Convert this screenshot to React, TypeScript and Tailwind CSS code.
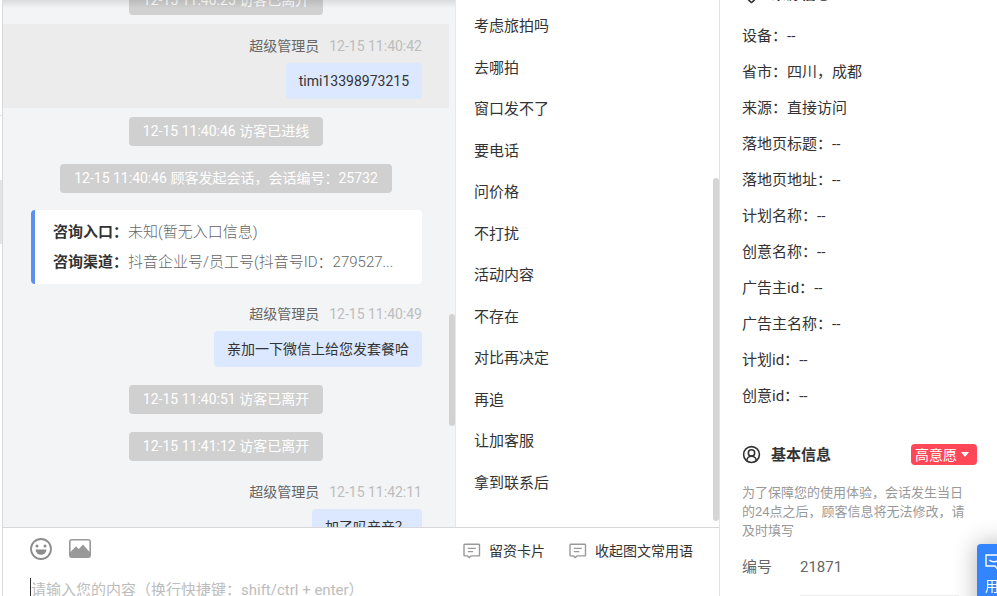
import { CircleUserRound, MapPin } from 'lucide-react'

const quickReplies = [
  '考虑旅拍吗', '去哪拍', '窗口发不了', '要电话', '问价格', '不打扰',
  '活动内容', '不存在', '对比再决定', '再追', '让加客服', '拿到联系后',
]

const sourceInfo = [
  ['设备', '--'],
  ['省市', '四川，成都'],
  ['来源', '直接访问'],
  ['落地页标题', '--'],
  ['落地页地址', '--'],
  ['计划名称', '--'],
  ['创意名称', '--'],
  ['广告主id', '--'],
  ['广告主名称', '--'],
  ['计划id', '--'],
  ['创意id', '--'],
]

function Notice({ children }: { children: string }) {
  return (
    <div className="flex justify-center py-[9px]">
      <p className="h-[29px] rounded-sm bg-[#d0d0d0] px-3.5 text-sm leading-[29px] text-white">{children}</p>
    </div>
  )
}

function Message({ time, text, active = false }: { time: string; text: string; active?: boolean }) {
  return (
    <div className={`flex h-[84px] flex-col items-end pt-3 pr-[27px] ${active ? 'bg-[#ececec]' : ''}`}>
      <div className="flex gap-2.5 text-sm leading-5">
        <span className="text-[#666]">超级管理员</span>
        <time className="text-[#bdbdbd]">{time}</time>
      </div>
      <p className="mt-[7px] h-9 rounded bg-[#dce8ff] px-[13px] text-sm leading-9 text-[#333]">{text}</p>
    </div>
  )
}

function CardIcon() {
  return (
    <svg width="18" height="16" viewBox="0 0 18 16" fill="none" stroke="#999" strokeWidth="1.4">
      <path d="M1.7 1.2h14.1a.7.7 0 0 1 .7.7v10.3a.7.7 0 0 1-.7.7H8l-1.8 1.6-1.8-1.6H1.7a.7.7 0 0 1-.7-.7V1.9a.7.7 0 0 1 .7-.7Z" />
      <path d="M4.8 5.4h8M4.8 8.6h5.4" />
    </svg>
  )
}

function Chat() {
  return (
    <section className="relative flex min-w-0 flex-1 overflow-hidden border-r border-[#e6e8eb] bg-[#f3f4f6]">
      <div className="-mt-[23px] min-w-0 flex-1">
        <Notice>12-15 11:40:25 访客已离开</Notice>
        <Message time="12-15 11:40:42" text="timi13398973215" active />
        <Notice>12-15 11:40:46 访客已进线</Notice>
        <Notice>12-15 11:40:46 顾客发起会话，会话编号：25732</Notice>
        <dl className="my-2 mr-[27px] ml-7 overflow-hidden rounded-sm border-l-4 border-[#5b8ff0] bg-white py-[7px] pl-[18px] text-[15px] leading-[30px] whitespace-nowrap">
          <div className="flex">
            <dt className="font-bold text-[#333]">咨询入口：</dt>
            <dd className="font-light text-[#666]">未知(暂无入口信息)</dd>
          </div>
          <div className="flex">
            <dt className="font-bold text-[#333]">咨询渠道：</dt>
            <dd className="font-light text-[#666]">抖音企业号/员工号(抖音号ID：279527...</dd>
          </div>
        </dl>
        <Message time="12-15 11:40:49" text="亲加一下微信上给您发套餐哈" />
        <Notice>12-15 11:40:51 访客已离开</Notice>
        <Notice>12-15 11:41:12 访客已离开</Notice>
        <Message time="12-15 11:42:11" text="加了吗亲亲？" />
      </div>
      <div className="w-1.5 pt-[314px]">
        <div className="h-28 rounded-full bg-[#d2d2d2]" />
      </div>
      <div className="absolute inset-x-0 top-0 h-2 bg-linear-to-b from-black/10 to-transparent" />
    </section>
  )
}

function QuickReplies() {
  return (
    <section className="flex w-[263px] shrink-0 bg-white">
      <ul className="flex flex-1 flex-col justify-between pt-4 pb-[34px] pl-[18px] text-[15px] leading-5 text-[#333]">
        {quickReplies.map((reply) => (
          <li key={reply}>{reply}</li>
        ))}
      </ul>
      <div className="w-1.5 pt-[178px] pb-1.5">
        <div className="h-full rounded-full bg-[#d6d6d6]" />
      </div>
    </section>
  )
}

function Composer() {
  return (
    <footer className="h-[69px] shrink-0 overflow-hidden border-t border-[#d8d8d8] bg-white">
      <div className="flex h-[46px] items-center justify-between pr-[26px] pl-[27px]">
        <div className="flex items-center gap-4 pb-1">
          <button aria-label="表情">
            <svg width="22" height="22" viewBox="0 0 22 22">
              <circle cx="11" cy="11" r="10" fill="none" stroke="#8c8c8c" strokeWidth="1.8" />
              <circle cx="7" cy="8" r="1.5" fill="#8c8c8c" />
              <circle cx="15" cy="8" r="1.5" fill="#8c8c8c" />
              <path d="M5.6 11.6h10.8a5.4 5.2 0 0 1-10.8 0Z" fill="#8c8c8c" />
            </svg>
          </button>
          <button aria-label="图片">
            <svg width="24" height="22" viewBox="0 0 24 22">
              <rect x="1.8" y="1.8" width="20.4" height="17.4" rx="2.2" fill="none" stroke="#999" strokeWidth="1.6" />
              <path d="M2 14.5 8 8.2l2.8 2.9L15 6.6l7 7.9v3.8a1 1 0 0 1-1 1H3a1 1 0 0 1-1-1Z" fill="#999" />
            </svg>
          </button>
        </div>
        <div className="flex items-center gap-6 text-sm text-[#333]">
          <button className="flex items-center gap-2">
            <CardIcon />
            留资卡片
          </button>
          <button className="flex items-center gap-2">
            <CardIcon />
            收起图文常用语
          </button>
        </div>
      </div>
      <div className="flex pt-1 pl-[27px]">
        <span className="h-6 w-px shrink-0 bg-[#333]" />
        <textarea
          aria-label="消息"
          placeholder="请输入您的内容（换行快捷键：shift/ctrl + enter）"
          className="h-12 flex-1 resize-none text-[15px] leading-6 outline-none placeholder:text-[#bdbdbd]"
        />
      </div>
    </footer>
  )
}

function VisitorPanel() {
  return (
    <aside className="w-[278px] shrink-0 overflow-hidden border-l border-[#e3e3e3] bg-white pl-[22px] text-[15px] text-[#333]">
      <h2 className="-mt-4 flex h-5 items-center gap-2.5 font-bold leading-5">
        <MapPin size={19} strokeWidth={2} />
        来源信息
      </h2>
      <dl className="mt-3.5">
        {sourceInfo.map(([label, value]) => (
          <div key={label} className="flex h-9 items-center">
            <dt>{label}：</dt>
            <dd>{value}</dd>
          </div>
        ))}
      </dl>
      <div className="mt-[30px] flex items-center justify-between pr-5">
        <h2 className="flex items-center gap-2.5 font-bold leading-5">
          <CircleUserRound size={19} strokeWidth={2} />
          基本信息
        </h2>
        <button className="flex h-[21px] items-center gap-1 rounded-sm bg-[#ff4757] pr-2 pl-1 text-sm text-white">
          高意愿
          <svg width="8" height="5" viewBox="0 0 8 5" fill="currentColor">
            <path d="M0 0h8L4 5Z" />
          </svg>
        </button>
      </div>
      <p className="mt-[18px] pr-7 text-[13px] leading-[19px] text-[#999]">
        为了保障您的使用体验，会话发生当日的24点之后，顾客信息将无法修改，请及时填写
      </p>
      <div className="flex pt-1 pr-[38px] text-[#666]">
        <label htmlFor="visitor-id" className="w-[58px] leading-[46px]">编号</label>
        <input
          id="visitor-id"
          defaultValue="21871"
          className="h-[52px] min-w-0 flex-1 border-b border-[#eee] pb-1.5 outline-none"
        />
      </div>
    </aside>
  )
}

export default function App() {
  return (
    <div className="flex h-screen overflow-hidden bg-white font-['Roboto','Noto_Sans_CJK_SC',sans-serif]">
      <div className="w-[3px] shrink-0 border-r border-[#d9d9d9] pt-[115px]">
        <div className="h-[65px] border-t border-[#e5e5e5]" />
        <div className="h-16 bg-[#e4e4e4]" />
      </div>
      <main className="flex min-w-0 flex-1 flex-col">
        <div className="flex min-h-0 flex-1">
          <Chat />
          <QuickReplies />
        </div>
        <Composer />
      </main>
      <VisitorPanel />
      <button className="fixed top-[544px] -right-5 flex h-24 w-10 flex-col rounded-l bg-[#3385ff] pt-2.5 pl-2 text-left text-sm text-white shadow-[0_0_24px_rgba(0,0,0,0.3)]">
        <svg width="20" height="18" viewBox="0 0 20 18" fill="none" stroke="currentColor" strokeWidth="1.4">
          <path d="M1 1h17v11h-4l-1.8 2.6L10 12H1Z" />
          <path d="M4.5 6c2 2.4 7 2.4 9 0" />
        </svg>
        <span className="mt-1 leading-5">用</span>
      </button>
    </div>
  )
}
